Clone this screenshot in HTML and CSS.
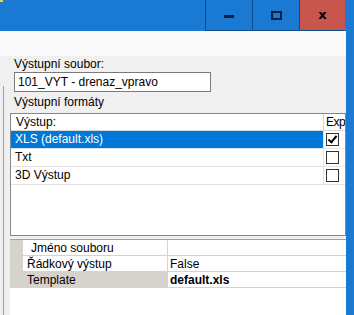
FILE: index.html
```html
<!DOCTYPE html>
<html lang="cs">
  <head>
    <meta charset="UTF-8">
    <title>Výstup</title>
    <link rel="stylesheet" href="styles.css">
  </head>
  <body>
  <header class="titlebar">
    <div class="corner"></div>
    <div class="caption-btns">
      <div class="cbtn"><span class="ico-min"></span></div>
      <div class="cbtn"><span class="ico-max"></span></div>
      <div class="cbtn close"><span class="ico-close">x</span></div>
    </div>
  </header>
  <div class="frame">
    <div class="main">
      <div class="strip"></div>
      <div class="panel">
        <div class="label">Výstupní soubor:</div>
        <div class="textbox">101_VYT - drenaz_vpravo</div>
        <div class="label">Výstupní formáty</div>
        <div class="list">
          <div class="row head">
            <div class="c-name">Výstup:</div>
            <div class="c-exp">Exp</div>
          </div>
          <div class="row sel">
            <div class="c-name">XLS (default.xls)</div>
            <div class="c-exp"><span class="chk on"></span></div>
          </div>
          <div class="row">
            <div class="c-name">Txt</div>
            <div class="c-exp"><span class="chk"></span></div>
          </div>
          <div class="row">
            <div class="c-name">3D Výstup</div>
            <div class="c-exp"><span class="chk"></span></div>
          </div>
        </div>
        <div class="props">
          <div class="prow">
            <div class="pm"></div>
            <div class="pn indent">Jméno souboru</div>
            <div class="pv"></div>
          </div>
          <div class="prow">
            <div class="pm"></div>
            <div class="pn">Řádkový výstup</div>
            <div class="pv">False</div>
          </div>
          <div class="prow psel">
            <div class="pm"></div>
            <div class="pn">Template</div>
            <div class="pv bold">default.xls</div>
          </div>
        </div>
      </div>
    </div>
    <div class="edge"></div>
  </div>
  </body>
</html>
```

FILE: styles.css
```css
html, body {
  margin: 0;
  height: 100%;
}
body {
  width: 354px;
  height: 315px;
  overflow: hidden;
  background: #f0f0f0;
  font-family: "Liberation Sans", Arial, sans-serif;
  font-size: 12px;
  color: #000;
  display: flex;
  flex-direction: column;
}
.titlebar {
  height: 31px;
  flex: none;
  background: #1a7ad3;
  display: flex;
  justify-content: space-between;
  padding-right: 9px;
}
.corner {
  width: 3px;
  height: 2px;
  background: #e8d44a;
}
.caption-btns {
  display: flex;
}
.cbtn {
  width: 46px;
  height: 30px;
  border-left: 1px solid #0e4c8c;
  border-bottom: 1px solid #0e4c8c;
  display: flex;
  align-items: center;
  justify-content: center;
}
.cbtn.close {
  width: 45px;
  background: #c8564c;
}
.ico-min {
  width: 10px;
  height: 3px;
  margin-top: 3px;
  background: #0a1f3d;
}
.ico-max {
  width: 7px;
  height: 5px;
  border: 2px solid #0a1f3d;
}
.ico-close {
  font-family: "DejaVu Sans", sans-serif;
  font-weight: bold;
  font-size: 13px;
  line-height: 13px;
  margin-top: -1px;
}
.frame {
  flex: 1;
  display: flex;
}
.main {
  flex: 1;
  display: flex;
  flex-direction: column;
}
.edge {
  width: 8px;
  background: #1a7ad3;
}
.strip {
  height: 25px;
  background: #fafafa;
}
.panel {
  flex: 1;
  padding: 1px 0 0 10px;
  position: relative;
}
.panel::before {
  content: "";
  position: absolute;
  left: 3px;
  top: 30px;
  bottom: 0;
  border-left: 1px solid #a0a0a0;
}
.label {
  height: 14px;
  line-height: 14px;
  padding-left: 4px;
}
.textbox {
  width: 192px;
  height: 18px;
  line-height: 18px;
  margin: 1px 0 3px 4px;
  padding-left: 3px;
  background: #fff;
  border: 1px solid #7a7a7a;
}
.list {
  margin-top: 4px;
  height: 121px;
  background: #fff;
  border: 1px solid #828790;
}
.row {
  display: flex;
  height: 17px;
  line-height: 17px;
  border-bottom: 1px solid #e3e3e3;
}
.row.head {
  height: 16px;
  line-height: 16px;
  border-bottom: 1px solid #d5d5d5;
}
.c-name {
  flex: 1;
  padding-left: 4px;
}
.head .c-name {
  padding-left: 5px;
}
.c-exp {
  width: 19px;
  border-left: 1px solid #e3e3e3;
  display: flex;
  align-items: center;
  padding-left: 2px;
  overflow: hidden;
  white-space: nowrap;
}
.head .c-exp {
  border-left-color: #d5d5d5;
  letter-spacing: -0.5px;
}
.row.sel .c-name {
  background: #0078d7;
  color: #fff;
}
.chk {
  width: 11px;
  height: 11px;
  border: 1px solid #333;
  background: #fff;
  position: relative;
}
.chk.on::after {
  content: "";
  position: absolute;
  left: 3px;
  top: 0;
  width: 3px;
  height: 7px;
  border: solid #000;
  border-width: 0 2px 2px 0;
  transform: rotate(40deg);
}
.props {
  margin-top: 3px;
  height: 76px;
  background: #fff;
  border-top: 1px solid #a0a0a0;
}
.prow {
  display: flex;
  height: 16px;
  line-height: 16px;
}
.pm {
  width: 13px;
  background: #d6d3ce;
}
.pn {
  width: 145px;
  padding-left: 4px;
  border-bottom: 1px solid #d6d3ce;
  border-right: 1px solid #d6d3ce;
  box-sizing: border-box;
}
.pn.indent {
  padding-left: 8px;
}
.pv {
  flex: 1;
  padding-left: 2px;
  border-bottom: 1px solid #d6d3ce;
}
.psel .pn {
  background: #d6d3ce;
}
.bold {
  font-weight: bold;
}
```
